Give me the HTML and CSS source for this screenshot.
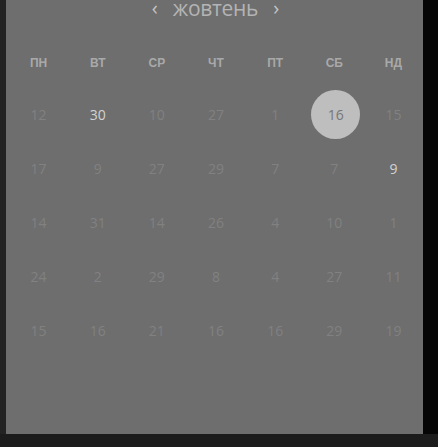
FILE: index.html
```html
<!DOCTYPE html>
<html lang="uk">
<head>
  <meta charset="UTF-8">
  <meta name="viewport" content="width=device-width, initial-scale=1.0">
  <title>Календар</title>
  <link rel="stylesheet" href="styles.css">
</head>
<body>

<div class="screen">
  <div class="edge-left"></div>

  <div class="panel">
    <div class="month-bar">
      <span class="nav">&lsaquo;</span>
      <span class="month">жовтень</span>
      <span class="nav">&rsaquo;</span>
    </div>

    <div class="weekdays">
      <div>ПН</div><div>ВТ</div><div>СР</div><div>ЧТ</div><div>ПТ</div><div>СБ</div><div>НД</div>
    </div>

    <div class="days">
      <div class="day">12</div>
      <div class="day bright">30</div>
      <div class="day">10</div>
      <div class="day">27</div>
      <div class="day">1</div>
      <div class="day"><span class="selected">16</span></div>
      <div class="day">15</div>

      <div class="day">17</div>
      <div class="day">9</div>
      <div class="day">27</div>
      <div class="day">29</div>
      <div class="day">7</div>
      <div class="day">7</div>
      <div class="day bright">9</div>

      <div class="day">14</div>
      <div class="day">31</div>
      <div class="day">14</div>
      <div class="day">26</div>
      <div class="day">4</div>
      <div class="day">10</div>
      <div class="day">1</div>

      <div class="day">24</div>
      <div class="day">2</div>
      <div class="day">29</div>
      <div class="day">8</div>
      <div class="day">4</div>
      <div class="day">27</div>
      <div class="day">11</div>

      <div class="day">15</div>
      <div class="day">16</div>
      <div class="day">21</div>
      <div class="day">16</div>
      <div class="day">16</div>
      <div class="day">29</div>
      <div class="day">19</div>
    </div>
  </div>

  <div class="edge-right"></div>
</div>

<div class="bottom-bar"></div>

</body>
</html>
```

FILE: styles.css
```css
body {
  margin: 0;
  background: #1c1c1c;
  font-family: "Open Sans", "Noto Sans", sans-serif;
}
.screen {
  display: flex;
  height: 434px;
}
.edge-left {
  width: 6px;
  background: #232323;
}
.edge-right {
  flex: 1;
  background: #050505;
}
.panel {
  width: 417px;
  background: #6e6e6e;
  overflow: hidden;
}
.month-bar {
  display: flex;
  justify-content: center;
  align-items: flex-start;
  gap: 15px;
  height: 16px;
  margin-left: 2px;
}
.month {
  font-size: 21px;
  letter-spacing: -0.3px;
  color: #b4b4b4;
  line-height: 16px;
}
.nav {
  font-size: 20px;
  color: #c4c4c4;
  line-height: 16px;
}
.weekdays {
  display: grid;
  grid-template-columns: repeat(7, 1fr);
  margin: 37px 0 0 3px;
  font-family: "Liberation Sans", Arial, sans-serif;
  font-weight: bold;
  font-size: 12px;
  color: #a9a9a9;
  text-align: center;
  line-height: 20px;
}
.days {
  display: grid;
  grid-template-columns: repeat(7, 1fr);
  grid-auto-rows: 54px;
  margin: 14px 0 0 3px;
}
.day {
  display: flex;
  align-items: center;
  justify-content: center;
  font-size: 14px;
  color: #818181;
}
.day.bright {
  color: #d2d2d2;
}
.selected {
  width: 49px;
  height: 49px;
  border-radius: 50%;
  background: #bebebe;
  color: #767676;
  display: flex;
  align-items: center;
  justify-content: center;
  margin-left: 3px;
}
.bottom-bar {
  height: 13px;
  background: #1c1c1c;
}
```
